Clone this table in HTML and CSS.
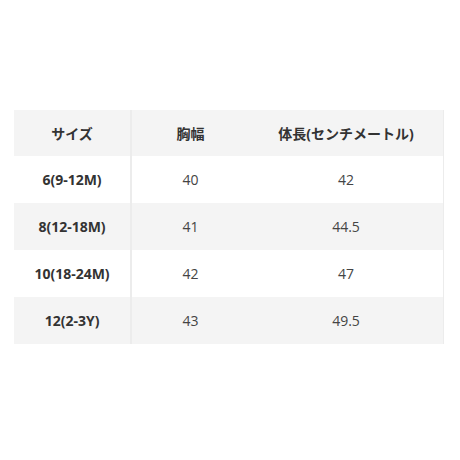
FILE: index.html
```html
<!DOCTYPE html>
<html lang="ja">
<head>
<meta charset="utf-8">
<link rel="stylesheet" href="styles.css">
</head>
<body>
<div class="page">
  <table class="size-table">
    <colgroup>
      <col class="c1"><col class="c2"><col class="c3">
    </colgroup>
    <thead>
      <tr><th>サイズ</th><th>胸幅</th><th>体長(センチメートル)</th></tr>
    </thead>
    <tbody>
      <tr><th>6(9-12M)</th><td>40</td><td>42</td></tr>
      <tr><th>8(12-18M)</th><td>41</td><td>44.5</td></tr>
      <tr><th>10(18-24M)</th><td>42</td><td>47</td></tr>
      <tr><th>12(2-3Y)</th><td>43</td><td>49.5</td></tr>
    </tbody>
  </table>
</div>
</body>
</html>
```
FILE: styles.css
```css
html, body {
  margin: 0;
  padding: 0;
  background: #fff;
}
.page {
  width: 460px;
  height: 460px;
  padding: 110px 16px 0 14px;
  box-sizing: border-box;
}
.size-table {
  width: 430px;
  border-collapse: collapse;
  table-layout: fixed;
  font-family: "Open Sans", "Noto Sans CJK JP", sans-serif;
  font-size: 14px;
  color: #333;
  border-right: 1px solid #ececec;
}
.c1 { width: 117px; }
.c2 { width: 118px; }
.c3 { width: auto; }
.size-table th,
.size-table td {
  height: 47px;
  padding: 0;
  text-align: center;
  vertical-align: middle;
  box-sizing: border-box;
}
.size-table thead th { height: 46px; }
.size-table th { font-weight: 700; }
.size-table td { font-weight: 400; color: #444; }
.size-table tr th:first-child { border-right: 2px solid #ececec; }
.size-table thead tr,
.size-table tbody tr:nth-child(even) {
  background: #f4f4f4;
}
```
